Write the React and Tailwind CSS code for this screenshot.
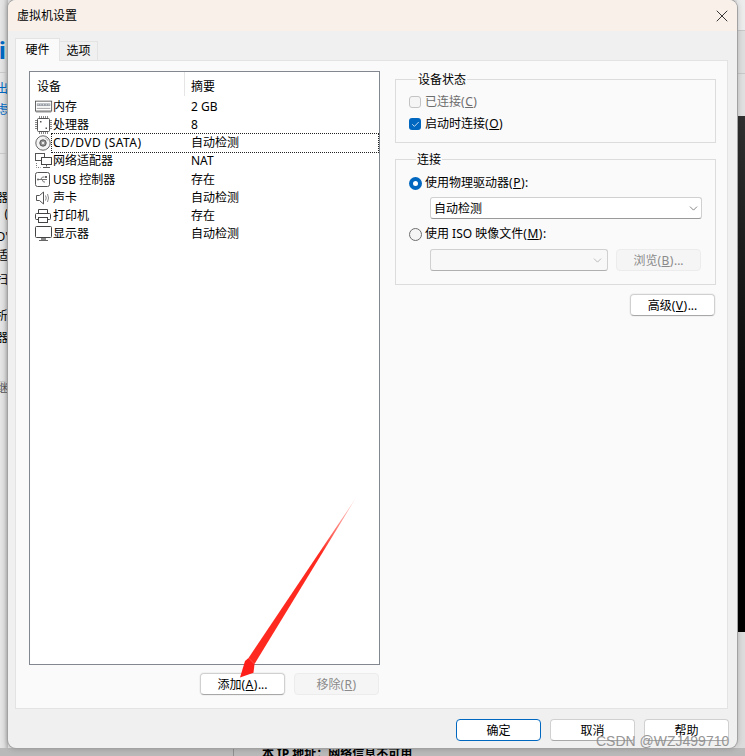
import { Check, ChevronDown, X } from 'lucide-react';

const font = 'font-["Noto_Sans","Noto_Sans_CJK_SC",sans-serif]';

function MemoryIcon() {
  return (
    <svg width="20" height="14" viewBox="0 0 20 14" fill="none">
      <rect x="0.5" y="0.5" width="18" height="11" fill="#fff" stroke="#555" />
      <rect x="2" y="3" width="15" height="3" fill="#9aa0a6" />
      <path d="M3 4.5h1M6 4.5h1M9 4.5h1M12 4.5h1M15 4.5h1" stroke="#fff" />
      <path d="M2 8.5h15" stroke="#999" />
      <path d="M1 12.5h17" stroke="#777" />
    </svg>
  );
}

function CpuIcon() {
  return (
    <svg width="18" height="18" viewBox="0 0 18 18" fill="none">
      <path d="M4.5 0v3M6.5 0v3M8.5 0v3M10.5 0v3M12.5 0v3M4.5 15v3M6.5 15v3M8.5 15v3M10.5 15v3M12.5 15v3M0 4.5h3M0 6.5h3M0 8.5h3M0 10.5h3M0 12.5h3M14 4.5h3M14 6.5h3M14 8.5h3M14 10.5h3M14 12.5h3" stroke="#888" />
      <rect x="2.5" y="2.5" width="12" height="13" rx="1" fill="#fff" stroke="#555" />
      <path d="M5 5h1.5v1.5H5zM10.5 11.5H12V13h-1.5z" fill="#555" />
    </svg>
  );
}

function DiscIcon() {
  return (
    <svg width="16" height="16" viewBox="0 0 16 16" fill="none">
      <circle cx="8" cy="8" r="7.2" fill="#f4f4f4" stroke="#666" />
      <circle cx="8" cy="8" r="3.2" fill="#999" stroke="#555" />
      <circle cx="8" cy="8" r="1.1" fill="#fff" />
      <path d="M10 2.8a5.6 5.6 0 0 1 3 3" stroke="#aaa" />
    </svg>
  );
}

function NetworkIcon() {
  return (
    <svg width="18" height="16" viewBox="0 0 18 16" fill="none">
      <rect x="0.5" y="0.5" width="9" height="7" fill="#fff" stroke="#555" />
      <rect x="6.5" y="4.5" width="10" height="7" fill="#fff" stroke="#444" />
      <path d="M11.5 11.5v2M8 14.5h7" stroke="#555" />
      <path d="M1.5 10v4.5h4" stroke="#777" strokeDasharray="1 1" />
    </svg>
  );
}

function UsbIcon() {
  return (
    <svg width="16" height="16" viewBox="0 0 16 16" fill="none">
      <rect x="0.5" y="0.5" width="14" height="14" rx="2" fill="#fff" stroke="#555" />
      <path d="M3 7.5h9M5.5 7.5l2-2.5h2M7 7.5l1.5 2.5h1.5" stroke="#777" />
      <rect x="10" y="4" width="2" height="2" fill="#666" />
      <circle cx="3" cy="7.5" r="1" fill="#666" />
    </svg>
  );
}

function SoundIcon() {
  return (
    <svg width="15" height="16" viewBox="0 0 15 16" fill="none">
      <path d="M1.5 5.5h3l4-3.5v12l-4-3.5h-3z" fill="#fff" stroke="#555" />
      <path d="M10.5 5.5q1.5 2.5 0 5M12.5 4q2 4 0 8" stroke="#888" />
    </svg>
  );
}

function PrinterIcon() {
  return (
    <svg width="16" height="16" viewBox="0 0 16 16" fill="none">
      <path d="M3.5 5.5v-4h9v4" stroke="#444" fill="#fff" />
      <rect x="0.5" y="5.5" width="15" height="6" rx="1" fill="#fff" stroke="#444" />
      <rect x="3.5" y="9.5" width="9" height="5" fill="#fff" stroke="#444" />
    </svg>
  );
}

function MonitorIcon() {
  return (
    <svg width="18" height="16" viewBox="0 0 18 16" fill="none">
      <rect x="0.5" y="0.5" width="16" height="11" rx="1" fill="#fff" stroke="#444" />
      <path d="M6 12h5v2H6z" fill="#888" />
      <path d="M4 14.5h9" stroke="#666" />
    </svg>
  );
}

const devices = [
  { icon: <MemoryIcon />, name: '内存', summary: '2 GB' },
  { icon: <CpuIcon />, name: '处理器', summary: '8' },
  { icon: <DiscIcon />, name: 'CD/DVD (SATA)', summary: '自动检测', selected: true },
  { icon: <NetworkIcon />, name: '网络适配器', summary: 'NAT' },
  { icon: <UsbIcon />, name: 'USB 控制器', summary: '存在' },
  { icon: <SoundIcon />, name: '声卡', summary: '自动检测' },
  { icon: <PrinterIcon />, name: '打印机', summary: '存在' },
  { icon: <MonitorIcon />, name: '显示器', summary: '自动检测' },
];

// clipped pieces of the window behind the dialog
const behindLeft = [
  { h: 'h-[73px] pt-[36px] pr-[2px] text-[24px] leading-[28px] text-[#0067c0] font-bold', text: 'i', border: true },
  { h: 'h-[27px] pt-[9px] text-[12px] leading-[14px] text-[#0067c0]', text: '出' },
  { h: 'h-[54px] pt-[3px] text-[12px] leading-[14px] text-[#0067c0]', text: '虑', border: true },
  { h: 'h-[37px]', text: '' },
  { h: 'h-[16px] text-[12px] leading-[14px] text-black', text: '器' },
  { h: 'h-[23px] text-[12px] leading-[14px] text-black', text: '(' },
  { h: 'h-[19px] text-[12px] leading-[14px] text-black', text: "D'" },
  { h: 'h-[24px] text-[12px] leading-[14px] text-black', text: '适' },
  { h: 'h-[36px] text-[12px] leading-[14px] text-black', text: '扫' },
  { h: 'h-[22px] text-[12px] leading-[14px] text-black', text: '析' },
  { h: 'h-[51px] text-[12px] leading-[14px] text-black', text: '器', border: true },
  { h: 'h-[20px] text-[12px] leading-[14px] text-[#555]', text: '继' },
];

function Mnemonic({ letter }) {
  return (
    <span className="tracking-[0.5px]">
      (<u>{letter}</u>)
    </span>
  );
}

function Btn({ label, letter, suffix = '', disabled, primary, className = '' }) {
  return (
    <button
      className={`w-[85px] h-[22px] rounded-[4px] border flex items-center justify-center text-[12px] leading-[20px] pt-px ${
        disabled
          ? 'bg-[#f5f5f5] border-[#ececec] text-[#8a8a8a]'
          : primary
            ? 'bg-white border-[#0067c0] text-black'
            : 'bg-white border-[#d0d0d0] border-b-[#a8a8a8] text-black'
      } ${className}`}
    >
      {label}
      {letter && <Mnemonic letter={letter} />}
      {suffix}
    </button>
  );
}

function Arrow() {
  return (
    <svg className="absolute left-[230px] top-[490px]" width="135" height="195" viewBox="0 0 135 195" fill="none">
      <defs>
        <linearGradient id="shaft" x1="126" y1="7" x2="90" y2="62" gradientUnits="userSpaceOnUse">
          <stop offset="0" stopColor="#ff2a1f" stopOpacity="0.15" />
          <stop offset="1" stopColor="#ff2a1f" />
        </linearGradient>
      </defs>
      <path d="M126.5 7L18.5 168L24.5 174z" fill="url(#shaft)" />
      <path d="M10 187.5L15 171L18.5 168L24.5 174L23.5 182.7z" fill="#ff1f1a" />
    </svg>
  );
}

export default function App() {
  return (
    <div className={`relative w-[745px] h-[756px] overflow-hidden bg-[#e2e2e2] ${font}`}>
      {/* window behind the dialog */}
      <div className="flex h-[748px]">
        <div className="w-[8px] h-full overflow-hidden bg-gradient-to-r from-[#e6e6e6] via-[#dedede] to-[#bdbdbd]">
          {behindLeft.map((row, i) => (
            <div key={i} className={`${row.h} w-[8px] box-border overflow-hidden flex justify-end ${row.border ? 'border-b border-[#c8c8c8]' : ''}`}>
              <span className="shrink-0">{row.text}</span>
            </div>
          ))}
        </div>
        <div className="ml-auto w-[8px] flex flex-col">
          <div className="h-[30px] bg-[#ececec]" />
          <div className="h-[43px] bg-[#dedede] border-t border-[#c8c8c8]" />
          <div className="h-[43px] bg-[#e0e0e0] border-t border-[#c8c8c8]" />
          <div className="h-[516px] bg-gradient-to-b from-[#303030] to-black" />
          <div className="flex-1 bg-[#dcdcdc]" />
        </div>
      </div>
      <div className="h-[8px] bg-[#b9b9b9] flex pl-[233px] overflow-hidden">
        <div className="w-px h-full bg-[#8f8f8f]" />
        <div className="ml-[28px] text-[12px] leading-[12px] font-bold text-black whitespace-nowrap">本 IP 地址：网络信息不可用</div>
      </div>

      {/* dialog */}
      <div className="absolute left-[8px] top-0 w-[729px] h-[748px] rounded-[8px] bg-[#f0f0f0] shadow-[0_0_0_1px_#a2a2a2,0_0_6px_rgba(0,0,0,0.25)] overflow-hidden flex flex-col text-black text-[12px]">
        <div className="h-[31px] shrink-0 bg-[#f9f1e9] flex items-center justify-between pl-[9px] pr-[5px]">
          <span className="text-[12px]">虚拟机设置</span>
          <X size={20} strokeWidth={1} color="#111" />
        </div>

        <div className="flex px-[7px] pt-[7px]">
          <div className="w-[45px] h-[23px] bg-[#fafafa] border border-b-0 border-[#e3e3e3] flex items-center justify-center relative z-10 -mb-px text-[12px]">硬件</div>
          <div className="w-[38px] h-[19px] mt-[3px] bg-[#f0f0f0] border border-l-0 border-b-0 border-[#e3e3e3] flex items-center justify-center text-[12px]">选项</div>
        </div>

        <div className="mx-[7px] w-[713px] h-[649px] box-border bg-[#fafafa] border border-[#e3e3e3] flex pl-[13px] pt-[10px]">
          {/* device list */}
          <div className="w-[351px]">
            <div className="h-[594px] box-border border border-[#828790] bg-white">
              <div className="flex h-[26px]">
                <div className="w-[155px] h-[24px] border-r border-[#e5e5e5] pl-[7px] pt-[7px] leading-[16px]">设备</div>
                <div className="pl-[6px] pt-[7px] leading-[16px]">摘要</div>
              </div>
              {devices.map((d) => (
                <div key={d.name} className="flex h-[18.15px] items-center">
                  <div className="w-[155px] flex items-center shrink-0">
                    <div className="w-[23px] flex justify-start shrink-0 pl-[5px]">{d.icon}</div>
                    <span
                      className={`whitespace-nowrap leading-[16px] ${
                        d.selected ? 'tracking-[0.45px] outline outline-1 outline-dotted outline-offset-1 outline-[#222] w-[324px] -mr-[200px]' : ''
                      }`}
                    >
                      {d.name}
                    </span>
                  </div>
                  <div className="pl-[6px] leading-[16px]">{d.summary}</div>
                </div>
              ))}
            </div>
            <div className="flex justify-end gap-[9px] mt-[8px] pr-px">
              <Btn label="添加" letter="A" suffix="..." className="ring-1 ring-[#f1f1f1]" />
              <Btn label="移除" letter="R" disabled />
            </div>
          </div>

          {/* right column */}
          <div className="w-[321px] ml-[15px] flex flex-col">
            <fieldset className="h-[73px] box-border border border-[#dcdcdc] pl-[13px] -mt-[1px]">
              <legend className="ml-[8px] px-[1px] pt-[2px] text-[12px] leading-[16px]">设备状态</legend>
              <div className="flex items-center h-[22px] mt-[3px] text-[#6d6d6d]">
                <span className="w-[12px] h-[12px] rounded-[3px] border border-[#c4c4c4] bg-[#f5f5f5]" />
                <span className="ml-[4px]">已连接<Mnemonic letter="C" /></span>
              </div>
              <div className="flex items-center h-[22px]">
                <span className="w-[12px] h-[12px] rounded-[3px] bg-[#0067c0] flex items-center justify-center">
                  <Check size={9} color="#fff" strokeWidth={2} />
                </span>
                <span className="ml-[4px]">启动时连接<Mnemonic letter="O" /></span>
              </div>
            </fieldset>

            <fieldset className="h-[135px] box-border border border-[#dcdcdc] pl-[13px] mt-[7px]">
              <legend className="ml-[7px] px-[1px] pt-[2px] text-[12px] leading-[16px]">连接</legend>
              <div className="flex items-center h-[22px] mt-[4px]">
                <span className="w-[13px] h-[13px] rounded-full bg-[#0067c0] flex items-center justify-center">
                  <span className="w-[5px] h-[5px] rounded-full bg-white" />
                </span>
                <span className="ml-[3px]">使用物理驱动器<Mnemonic letter="P" />:</span>
              </div>
              <div className="w-[272px] h-[22px] ml-[21px] mt-[3px] box-border bg-white border border-[#d0d0d0] border-b-[#9a9a9a] rounded-[3px] flex items-center justify-between pl-[3px] pr-[1px]">
                <span className="pt-[2px]">自动检测</span>
                <ChevronDown size={13} strokeWidth={1.2} color="#444" />
              </div>
              <div className="flex items-center h-[22px] mt-[4px]">
                <span className="w-[13px] h-[13px] rounded-full border border-[#6e6e6e] bg-[#f5f5f5]" />
                <span className="ml-[3px]">使用 ISO 映像文件<Mnemonic letter="M" />:</span>
              </div>
              <div className="flex ml-[21px] mt-[4px]">
                <div className="w-[178px] h-[22px] box-border bg-[#f8f8f8] border border-[#d0d0d0] border-b-[#b0b0b0] rounded-[3px] flex items-center justify-end pr-[3px]">
                  <ChevronDown size={13} strokeWidth={1.2} color="#9a9a9a" />
                </div>
                <Btn label="浏览" letter="B" suffix="..." disabled className="ml-[8px]" />
              </div>
            </fieldset>

            <div className="flex justify-end pr-px mt-[9px]">
              <Btn label="高级" letter="V" suffix="..." className="ring-1 ring-[#f1f1f1]" />
            </div>
          </div>
        </div>

        <div className="flex justify-end gap-[9px] pr-[8px] mt-[10px]">
          <Btn label="确定" primary />
          <Btn label="取消" />
          <Btn label="帮助" />
        </div>
      </div>

      <Arrow />

      <div className="absolute left-[596px] top-[732px] text-[14px] leading-[18px] text-[#8c8c8c] opacity-90 font-['Liberation_Sans',sans-serif] whitespace-nowrap">
        CSDN @WZJ499710
      </div>
    </div>
  );
}
